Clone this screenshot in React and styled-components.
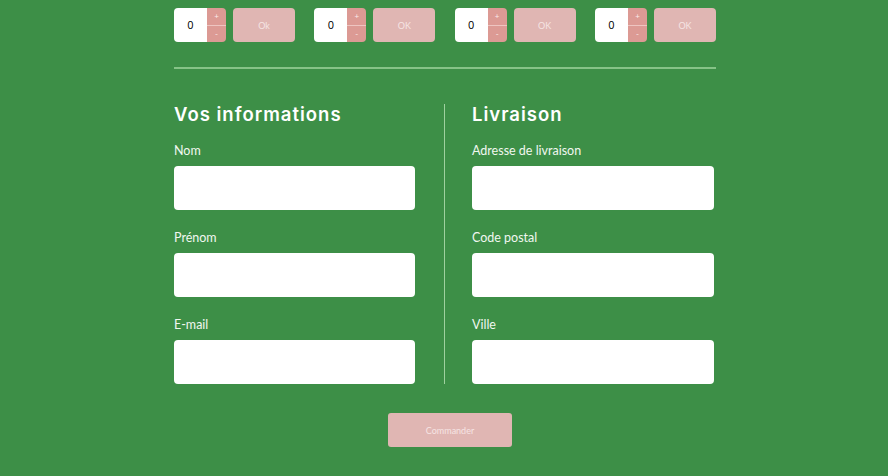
import React from "react";
import styled, { createGlobalStyle } from "styled-components";

const GlobalStyle = createGlobalStyle`
    body {
        margin: 0;
        background-color: #3d8f47;
        font-family: "Lato", "Noto Sans", sans-serif;
    }
`;

const products = [{ label: "Ok" }, { label: "OK" }, { label: "OK" }, { label: "OK" }];

const leftFields = ["Nom", "Prénom", "E-mail"];
const rightFields = ["Adresse de livraison", "Code postal", "Ville"];

function Quantity({ label }) {
    return (
        <QtyGroup>
            <QtyBox>
                <QtyValue>0</QtyValue>
                <Stepper>
                    <StepButton>+</StepButton>
                    <StepButton>-</StepButton>
                </Stepper>
            </QtyBox>
            <OkButton>{label}</OkButton>
        </QtyGroup>
    );
}

function Column({ title, fields }) {
    return (
        <FormColumn>
            <Title>{title}</Title>
            {fields.map((f) => (
                <Field key={f}>
                    <Label>{f}</Label>
                    <Input type="text" />
                </Field>
            ))}
        </FormColumn>
    );
}

export default function App() {
    return (
        <>
            <GlobalStyle />
            <Page>
                <QtyRow>
                    {products.map((p, i) => (
                        <Quantity key={i} label={p.label} />
                    ))}
                </QtyRow>
                <Rule />
                <FormGrid>
                    <Column title="Vos informations" fields={leftFields} />
                    <Divider />
                    <Column title="Livraison" fields={rightFields} />
                </FormGrid>
                <Footer>
                    <SubmitButton>Commander</SubmitButton>
                </Footer>
            </Page>
        </>
    );
}

const Page = styled.div`
    width: 542px;
    margin: 0 0 0 174px;
    padding-top: 8px;
    display: flex;
    flex-direction: column;
`;

const QtyRow = styled.div`
    display: flex;
    justify-content: space-between;
`;

const QtyGroup = styled.div`
    display: flex;
    gap: 7px;
`;

const QtyBox = styled.div`
    display: flex;
    height: 34px;
    border-radius: 4px;
    overflow: hidden;
`;

const QtyValue = styled.div`
    width: 33px;
    background: #ffffff;
    display: flex;
    align-items: center;
    justify-content: center;
    font-family: "Inter", sans-serif;
    font-size: 10px;
    color: #000;
`;

const Stepper = styled.div`
    width: 19px;
    display: flex;
    flex-direction: column;
    background: #dc9a94;
`;

const StepButton = styled.div`
    flex: 1;
    display: flex;
    align-items: center;
    justify-content: center;
    color: #fbeaea;
    font-size: 8px;
    & + & {
        border-top: 1px solid #eec5c1;
    }
`;

const OkButton = styled.button`
    width: 62px;
    height: 34px;
    border: none;
    border-radius: 4px;
    background: #e0b6b3;
    color: #f6e4e3;
    font-family: "Lato", sans-serif;
    font-size: 9px;
    padding: 0;
`;

const Rule = styled.hr`
    margin: 25px 0 0;
    border: none;
    height: 2px;
    background: #86c387;
`;

const FormGrid = styled.div`
    display: grid;
    grid-template-columns: 241px 57px 242px;
    margin-top: 35px;
`;

const FormColumn = styled.div`
    display: flex;
    flex-direction: column;
`;

const Title = styled.h2`
    margin: 0;
    font-family: "Inter", sans-serif;
    font-weight: 600;
    font-size: 18.5px;
    line-height: 20px;
    color: #ffffff;
    letter-spacing: 1px;
`;

const Field = styled.div`
    display: flex;
    flex-direction: column;
    margin-top: 19px;
    & + & {
        margin-top: 20px;
    }
`;

const Label = styled.label`
    font-size: 12.5px;
    line-height: 15px;
    color: #f1f7f0;
    margin-bottom: 8px;
`;

const Input = styled.input`
    height: 44px;
    border: none;
    border-radius: 4px;
    background: #ffffff;
    box-sizing: border-box;
    padding: 0 10px;
`;

const Divider = styled.div`
    background: #9fd19f;
    width: 1px;
    margin-left: 29px;
`;

const Footer = styled.div`
    display: flex;
    justify-content: center;
    padding-left: 10px;
    margin-top: 29px;
`;

const SubmitButton = styled.button`
    width: 124px;
    height: 34px;
    border: none;
    border-radius: 3px;
    background: #e0b6b3;
    color: #f6e4e3;
    font-family: "Lato", sans-serif;
    font-size: 9px;
`;
